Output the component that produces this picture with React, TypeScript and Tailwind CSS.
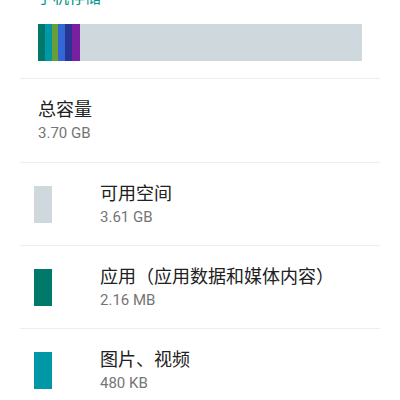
const segments = [
  { w: 7, c: "bg-[#00796b]" },
  { w: 7, c: "bg-[#0097a7]" },
  { w: 6, c: "bg-[#689f38]" },
  { w: 7, c: "bg-[#3367d6]" },
  { w: 7, c: "bg-[#283593]" },
  { w: 8, c: "bg-[#7b1fa2]" },
];

const items = [
  { title: "可用空间", size: "3.61 GB", swatch: "bg-[#cfd8dc]" },
  { title: "应用（应用数据和媒体内容）", size: "2.16 MB", swatch: "bg-[#00796b]" },
  { title: "图片、视频", size: "480 KB", swatch: "bg-[#0097a7]" },
];

export default function App() {
  return (
    <div
      className="h-[400px] w-[400px] overflow-hidden bg-white"
      style={{ fontFamily: "Roboto, 'Noto Sans CJK SC', sans-serif" }}
    >
      <div className="-mt-[12px]">
        <div className="h-[20px] pl-[37px] text-[16px] leading-[20px] text-[#009688]">手机存储</div>

        <div className="mx-[38px] mt-[16px] flex h-[37px] bg-[#cfd8dc]">
          {segments.map((s, i) => (
            <div key={i} className={s.c} style={{ width: s.w }} />
          ))}
        </div>

        <div className="mx-[20px] mt-[17px] h-px bg-[#eeeeee]" />

        <div className="flex h-[83px] flex-col justify-center pl-[38px]">
          <div className="text-[18px] leading-[24px] text-[#212121]">总容量</div>
          <div className="mt-[1px] text-[15px] leading-[20px] text-[#757575]">3.70 GB</div>
        </div>

        {items.map((it) => (
          <div key={it.title}>
            <div className="mx-[20px] h-px bg-[#eeeeee]" />
            <div className="flex h-[82px] items-center">
              <div className={`ml-[34px] h-[37px] w-[18px] ${it.swatch}`} />
              <div className="ml-[48px] flex flex-col">
                <div className="text-[18px] leading-[24px] text-[#212121]">{it.title}</div>
                <div className="mt-[1px] text-[15px] leading-[20px] text-[#757575]">{it.size}</div>
              </div>
            </div>
          </div>
        ))}
      </div>
    </div>
  );
}
